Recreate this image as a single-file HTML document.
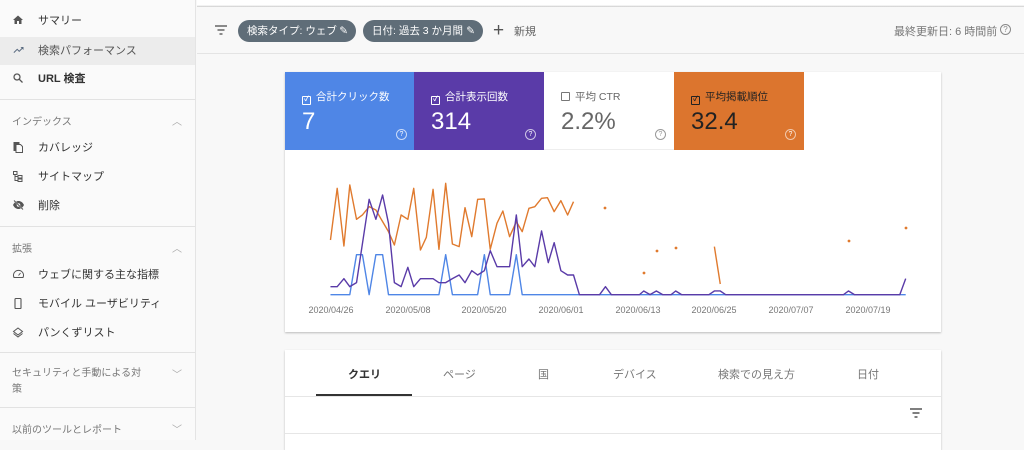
<!DOCTYPE html>
<html><head><meta charset="utf-8"><style>
*{margin:0;padding:0;box-sizing:border-box}
body{width:1024px;height:440px;overflow:hidden;background:#f8f8f8;font-family:"Liberation Sans","Noto Sans CJK JP",sans-serif;position:relative;color:#202124}
.sb{position:absolute;left:0;top:0;width:196px;height:440px;background:#fafafa;border-right:1px solid #e4e4e4}
.it{position:absolute;left:0;width:195px;height:28px;font-size:11px;line-height:28px;padding-left:38px;color:#333}
.it svg{position:absolute;left:12px;top:7px}
.sec{position:absolute;left:12px;font-size:10px;color:#777}
.chev{position:absolute;left:172px;font-size:10px;color:#aaa}
.dv{position:absolute;left:0;width:195px;height:1px;background:#e2e2e2}
.chip{position:absolute;top:20px;height:22px;border-radius:11px;background:#5f6d78;color:#fff;font-size:10.5px;line-height:22px;padding-left:9px}
.card{position:absolute;background:#fff;box-shadow:0 1px 2px rgba(0,0,0,.25)}
.t{position:absolute;top:72px;height:78px;width:130px;color:#fff}
.t .l{position:absolute;left:17px;top:17px;font-size:10.5px}
.t .v{position:absolute;left:17px;top:36px;font-size:24px}
.t .q{position:absolute;right:8px;top:57px;width:11px;height:11px;border:1px solid rgba(255,255,255,.7);border-radius:50%;font-size:7px;text-align:center;line-height:9px}
.cb{display:inline-block;width:9px;height:9px;border:1.5px solid currentColor;border-radius:1px;margin-right:5px;vertical-align:-1px;font-size:7px;line-height:6px;text-align:center;font-weight:bold}
.tab{position:absolute;top:366px;font-size:11px;color:#777}
</style></head><body>
<div class="sb">
<div class="it" style="top:7px"><svg width="12" height="12" viewBox="0 0 24 24"><path d="M10 20v-6h4v6h5v-8h3L12 3 2 12h3v8z" fill="#555"/></svg>サマリー</div>
<div class="it" style="top:37px;background:#ececec;color:#555"><svg width="13" height="12" viewBox="0 0 24 24"><path d="M16 6l2.3 2.3-4.9 4.9-4-4L2 16.6 3.4 18l6-6 4 4 6.3-6.3L22 12V6z" fill="#5a6b80"/></svg>検索パフォーマンス</div>
<div class="it" style="top:65px;font-weight:bold;color:#333"><svg width="12" height="12" viewBox="0 0 24 24"><circle cx="10" cy="10" r="6" stroke="#555" stroke-width="2.5" fill="none"/><path d="M14.5 14.5L21 21" stroke="#555" stroke-width="2.5"/></svg>URL 検査</div>
<div class="dv" style="top:99px"></div>
<div class="sec" style="top:113px">インデックス</div><div class="chev" style="top:113px">︿</div>
<div class="it" style="top:134px"><svg width="12" height="13" viewBox="0 0 24 24"><path d="M4 2h10v2H6v14H4zM8 6h9l4 4v12H8z" fill="none" stroke="#555" stroke-width="2"/></svg>カバレッジ</div>
<div class="it" style="top:163px"><svg width="12" height="13" viewBox="0 0 24 24"><path d="M3 2h7v6H3zM12 10h8v5h-8zM12 17h8v5h-8zM6 8v12h6M6 12h6" fill="none" stroke="#555" stroke-width="2"/></svg>サイトマップ</div>
<div class="it" style="top:192px"><svg width="13" height="12" viewBox="0 0 24 24"><path d="M1 12c3-6 7-8 11-8s8 2 11 8c-3 6-7 8-11 8S4 18 1 12z" fill="#555"/><circle cx="12" cy="12" r="3.5" fill="#fafafa"/><path d="M3 3l18 18" stroke="#fafafa" stroke-width="3"/><path d="M3 3l18 18" stroke="#555" stroke-width="2"/></svg>削除</div>
<div class="dv" style="top:226px"></div>
<div class="sec" style="top:240px">拡張</div><div class="chev" style="top:240px">︿</div>
<div class="it" style="top:261px"><svg width="13" height="12" viewBox="0 0 24 24"><path d="M3 19a10 10 0 1 1 18 0z" fill="none" stroke="#555" stroke-width="2"/><path d="M12 15l4-5" stroke="#555" stroke-width="2"/></svg>ウェブに関する主な指標</div>
<div class="it" style="top:290px"><svg width="12" height="13" viewBox="0 0 24 24"><rect x="6" y="2" width="12" height="20" rx="1.5" fill="none" stroke="#555" stroke-width="2.2"/></svg>モバイル ユーザビリティ</div>
<div class="it" style="top:319px"><svg width="12" height="13" viewBox="0 0 24 24"><path d="M12 3l9 7-9 7-9-7zM3 14l9 7 9-7" fill="none" stroke="#555" stroke-width="2"/></svg>パンくずリスト</div>
<div class="dv" style="top:352px"></div>
<div class="sec" style="top:366px;line-height:16px;width:150px">セキュリティと手動による対<br>策</div><div class="chev" style="top:366px">﹀</div>
<div class="dv" style="top:407px"></div>
<div class="sec" style="top:421px">以前のツールとレポート</div><div class="chev" style="top:421px">﹀</div>
</div>
<div style="position:absolute;left:197px;top:0;width:827px;height:7px;background:linear-gradient(#fff,#fff 5px,#ccc 7px)"></div>
<div style="position:absolute;left:197px;top:7px;width:827px;height:47px;background:#f8f8f8;border-bottom:1px solid #e4e4e4"></div>
<svg style="position:absolute;left:214px;top:24px" width="14" height="12" viewBox="0 0 14 12"><path d="M1 2h12M3.5 6h7M5.5 10h3" stroke="#666" stroke-width="1.4"/></svg>
<div class="chip" style="left:238px;width:118px">検索タイプ: ウェブ <span style="position:absolute;right:8px">✎</span></div>
<div class="chip" style="left:363px;width:120px">日付: 過去 3 か月間 <span style="position:absolute;right:8px">✎</span></div>
<div style="position:absolute;left:493px;top:20px;font-size:19px;color:#555;line-height:22px">+</div>
<div style="position:absolute;left:514px;top:23px;font-size:11px;color:#666">新規</div>
<div style="position:absolute;left:894px;top:23px;font-size:11px;color:#777">最終更新日: 6 時間前</div>
<div style="position:absolute;left:1000px;top:24px;width:11px;height:11px;border:1px solid #888;border-radius:50%;font-size:8px;line-height:9px;text-align:center;color:#888">?</div>
<div class="card" style="left:285px;top:72px;width:656px;height:260px"></div>
<div class="t" style="left:285px;background:#4f86e6"><div class="l"><span class="cb">✓</span>合計クリック数</div><div class="v">7</div><div class="q">?</div></div>
<div class="t" style="left:414px;background:#5a3ba8"><div class="l"><span class="cb">✓</span>合計表示回数</div><div class="v">314</div><div class="q">?</div></div>
<div class="t" style="left:544px;background:#fff;color:#666;border-bottom:1px solid #eee"><div class="l"><span class="cb" style="color:#777"></span>平均 CTR</div><div class="v">2.2%</div><div class="q" style="border-color:#999;color:#999">?</div></div>
<div class="t" style="left:674px;background:#dc752e;color:#222"><div class="l"><span class="cb">✓</span>平均掲載順位</div><div class="v">32.4</div><div class="q" style="border-color:rgba(255,255,255,.6);color:#fff">?</div></div>
<svg style="position:absolute;left:0;top:0" width="1024" height="440">
<g transform="translate(280,160) scale(0.4205,0.3333)" fill="none" stroke-width="1.4" stroke-linejoin="round">
<polyline vector-effect="non-scaling-stroke" stroke="#e07a2e" points="120,240 136,85 152,258 166,75 182,178 196,165 212,140 228,150 244,185 258,215 272,255 288,165 304,178 318,85 334,270 348,232 364,88 378,268 394,70 410,252 426,260 440,143 456,230 470,118 486,117 500,268 516,190 530,153 546,230 562,185 576,215 592,145 606,140 622,115 636,113 652,155 668,122 684,165 698,125"/>
<polyline vector-effect="non-scaling-stroke" stroke="#e07a2e" points="1033,260 1047,372"/>
<polyline vector-effect="non-scaling-stroke" stroke="#4f86e6" points="120,404 166,404 182,284 196,284 212,404 228,284 244,284 258,404 378,404 394,284 410,404 470,404 486,284 500,404 546,404 562,284 576,404 1488,404"/>
<polyline vector-effect="non-scaling-stroke" stroke="#5a3ba8" points="120,380 136,380 152,356 166,380 182,368 212,118 228,178 244,105 258,190 272,368 288,380 304,322 318,380 334,356 364,356 378,368 394,368 410,356 426,345 440,368 456,332 470,345 486,332 500,272 516,320 546,320 562,165 576,320 592,297 606,320 622,213 638,308 652,248 668,332 684,345 698,345 712,404 760,404 774,380 788,404 855,404 865,393 880,404 895,393 910,404 930,404 941,393 955,404 1020,404 1033,393 1047,393 1060,404 1340,404 1352,393 1366,404 1474,404 1488,356"/>
</g>
<g fill="#e07a2e"><circle cx="605" cy="208" r="1.4"/><circle cx="644" cy="273" r="1.4"/><circle cx="657" cy="251" r="1.4"/><circle cx="676" cy="248" r="1.4"/><circle cx="849" cy="241" r="1.4"/><circle cx="906" cy="228" r="1.4"/></g>
<g font-size="9" fill="#777" text-anchor="middle" font-family="Liberation Sans,sans-serif">
<text x="331" y="313">2020/04/26</text><text x="408" y="313">2020/05/08</text><text x="484" y="313">2020/05/20</text><text x="561" y="313">2020/06/01</text><text x="638" y="313">2020/06/13</text><text x="714" y="313">2020/06/25</text><text x="791" y="313">2020/07/07</text><text x="868" y="313">2020/07/19</text></g>
</svg>
<div class="card" style="left:285px;top:350px;width:656px;height:100px"></div>
<div class="tab" style="left:348px;color:#333;font-weight:bold">クエリ</div>
<div style="position:absolute;left:316px;top:394px;width:96px;height:2px;background:#333"></div>
<div class="tab" style="left:443px">ページ</div>
<div class="tab" style="left:538px">国</div>
<div class="tab" style="left:613px">デバイス</div>
<div class="tab" style="left:718px">検索での見え方</div>
<div class="tab" style="left:857px">日付</div>
<div style="position:absolute;left:285px;top:396px;width:656px;height:1px;background:#e6e6e6"></div>
<svg style="position:absolute;left:909px;top:407px" width="14" height="12" viewBox="0 0 14 12"><path d="M1 2h12M3.5 6h7M5.5 10h3" stroke="#555" stroke-width="1.4"/></svg>
<div style="position:absolute;left:285px;top:433px;width:656px;height:1px;background:#e6e6e6"></div>
</body></html>
